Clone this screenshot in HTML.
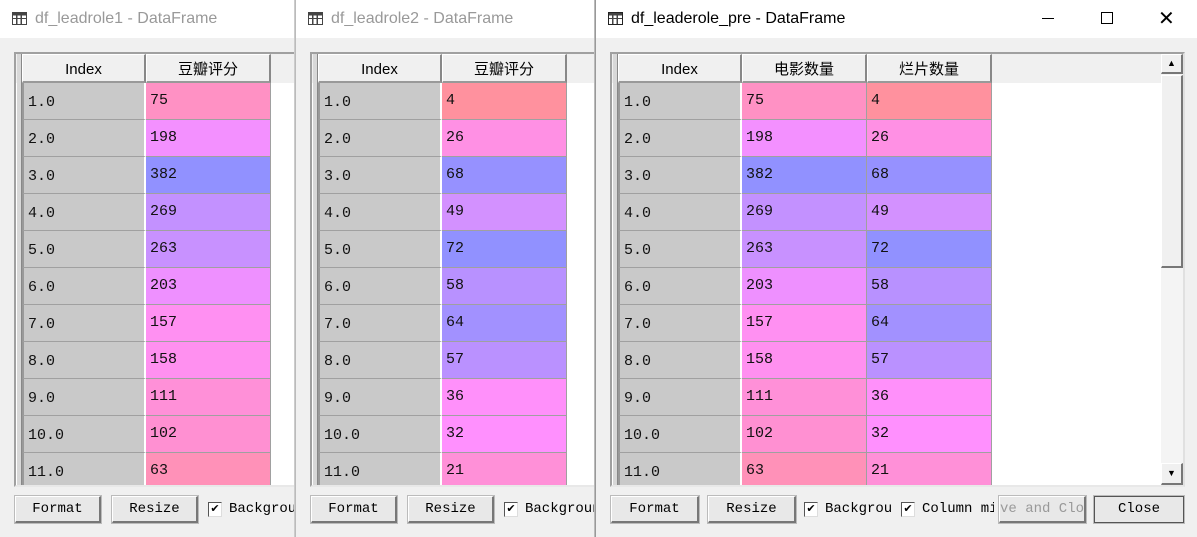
<!DOCTYPE html>
<html><head><meta charset="utf-8"><style>
*{margin:0;padding:0;box-sizing:border-box}
body{width:1197px;height:537px;overflow:hidden;background:#f0f0f0;position:relative;font-family:"Liberation Sans","Noto Sans CJK SC",sans-serif}
.win{position:absolute;top:0;height:537px;background:#f0f0f0;overflow:hidden}
.tb{position:absolute;left:0;top:0;right:0;height:38px;background:#fff;font-size:16px;line-height:38px;padding-left:35px;color:#999}
.ico{position:absolute;left:12px;top:12px;width:15px;height:13px;border:1.5px solid #444;background:
linear-gradient(90deg,transparent 3px,#444 3px,#444 4.5px,transparent 4.5px,transparent 7.5px,#444 7.5px,#444 9px,transparent 9px),
linear-gradient(180deg,#444 0,#444 2.5px,transparent 2.5px,transparent 5px,#444 5px,#444 6px,transparent 6px)}
.frame{position:absolute;top:52px;height:435px;background:#fff;border:2px solid #a0a0a0;border-right-color:#e0e0e0;border-bottom-color:#e8e8e8;overflow:hidden}
.hdrbg{position:absolute;left:0;top:0;right:0;height:29px;background:#f0f0f0}
.vh{position:absolute;left:1px;top:0;width:5px;height:440px;background:#d8d8d8;border-right:1px solid #888}
.col{position:absolute;top:0}
.h{height:29px;background:#f0f0f0;border:1px solid #a0a0a0;border-top:1px solid #fff;border-left:1px solid #fff;border-right:2px solid #888;border-bottom:2px solid #999;text-align:center;font-size:15px;line-height:30px;color:#000}
.c{height:37px;border-bottom:1px solid #a0a0a0;border-right:1px solid #a0a0a0;font-family:"Liberation Mono",monospace;font-size:15px;color:#111;padding-left:4px;padding-top:9px}
.ix .c{background:#c9c9c9;padding-top:11px;border-left:2px solid #999;border-right:2px solid #fff}
.btn{position:absolute;top:496px;height:27px;background:#e8e8e8;border:1px solid #fff;border-right:2px solid #777;border-bottom:2px solid #777;font-family:"Liberation Mono",monospace;font-size:14px;text-align:center;line-height:24px;color:#000;outline:1px solid #bbb}
.cb{position:absolute;top:502px;width:14px;height:15px;background:#fff;border:1px solid #555;border-right-color:#ddd;border-bottom-color:#ddd;font-size:11px;line-height:12px;text-align:center}
.lbl{position:absolute;top:501px;font-family:"Liberation Mono",monospace;font-size:14px;color:#000;white-space:nowrap;overflow:hidden}
</style></head><body>

<!-- Window 1 -->
<div class="win" style="left:0;width:295px;border-right:1px solid #ccc">
<div class="tb"><span class="ico"></span>df_leadrole1 - DataFrame</div>
<div class="frame" style="left:14px;width:300px"><div class="hdrbg"></div><div class="vh"></div>
<div class="col ix" style="left:6px;width:124px"><div class="h">Index</div>
<div class="c">1.0</div><div class="c">2.0</div><div class="c">3.0</div><div class="c">4.0</div><div class="c">5.0</div><div class="c">6.0</div><div class="c">7.0</div><div class="c">8.0</div><div class="c">9.0</div><div class="c">10.0</div><div class="c">11.0</div></div>
<div class="col" style="left:130px;width:125px"><div class="h">豆瓣评分</div>
<div class="c" style="background:#ff91c4">75</div><div class="c" style="background:#f390ff">198</div><div class="c" style="background:#9191ff">382</div><div class="c" style="background:#c391ff">269</div><div class="c" style="background:#c891ff">263</div><div class="c" style="background:#ee90ff">203</div><div class="c" style="background:#ff90f2">157</div><div class="c" style="background:#ff90f0">158</div><div class="c" style="background:#ff90d8">111</div><div class="c" style="background:#ff90d2">102</div><div class="c" style="background:#ff91b8">63</div></div>
</div>
<div class="btn" style="left:15px;width:86px">Format</div>
<div class="btn" style="left:112px;width:86px">Resize</div>
<div class="cb" style="left:208px">✔</div><div class="lbl" style="left:229px;width:66px">Background</div>
</div>

<!-- Window 2 -->
<div class="win" style="left:295px;width:300px;border-left:1px solid #bbb;border-right:1px solid #bbb">
<div class="tb"><span class="ico"></span>df_leadrole2 - DataFrame</div>
<div class="frame" style="left:14px;width:300px"><div class="hdrbg"></div><div class="vh"></div>
<div class="col ix" style="left:6px;width:124px"><div class="h">Index</div>
<div class="c">1.0</div><div class="c">2.0</div><div class="c">3.0</div><div class="c">4.0</div><div class="c">5.0</div><div class="c">6.0</div><div class="c">7.0</div><div class="c">8.0</div><div class="c">9.0</div><div class="c">10.0</div><div class="c">11.0</div></div>
<div class="col" style="left:130px;width:125px"><div class="h">豆瓣评分</div>
<div class="c" style="background:#ff919e">4</div><div class="c" style="background:#ff90e4">26</div><div class="c" style="background:#9691ff">68</div><div class="c" style="background:#d391ff">49</div><div class="c" style="background:#9191ff">72</div><div class="c" style="background:#b891ff">58</div><div class="c" style="background:#a291ff">64</div><div class="c" style="background:#ba91ff">57</div><div class="c" style="background:#ff90fa">36</div><div class="c" style="background:#ff90fe">32</div><div class="c" style="background:#ff90d8">21</div></div>
</div>
<div class="btn" style="left:15px;width:86px">Format</div>
<div class="btn" style="left:112px;width:86px">Resize</div>
<div class="cb" style="left:208px">✔</div><div class="lbl" style="left:229px;width:71px">Background</div>
</div>

<!-- Window 3 -->
<div class="win" style="left:595px;width:602px;border-left:1px solid #999">
<div class="tb" style="color:#000"><span class="ico" style="border-color:#222"></span>df_leaderole_pre - DataFrame
<span style="position:absolute;left:446px;top:18px;width:12px;height:1px;background:#000"></span>
<span style="position:absolute;left:505px;top:12px;width:12px;height:12px;border:1px solid #000"></span>
<span style="position:absolute;left:562px;top:0;font-size:20px;font-weight:300">✕</span></div>
<div class="frame" style="left:14px;width:575px"><div class="hdrbg"></div><div class="vh"></div>
<div class="col ix" style="left:6px;width:124px"><div class="h">Index</div>
<div class="c">1.0</div><div class="c">2.0</div><div class="c">3.0</div><div class="c">4.0</div><div class="c">5.0</div><div class="c">6.0</div><div class="c">7.0</div><div class="c">8.0</div><div class="c">9.0</div><div class="c">10.0</div><div class="c">11.0</div></div>
<div class="col" style="left:130px;width:125px"><div class="h">电影数量</div>
<div class="c" style="background:#ff91c4">75</div><div class="c" style="background:#f390ff">198</div><div class="c" style="background:#9191ff">382</div><div class="c" style="background:#c391ff">269</div><div class="c" style="background:#c891ff">263</div><div class="c" style="background:#ee90ff">203</div><div class="c" style="background:#ff90f2">157</div><div class="c" style="background:#ff90f0">158</div><div class="c" style="background:#ff90d8">111</div><div class="c" style="background:#ff90d2">102</div><div class="c" style="background:#ff91b8">63</div></div>
<div class="col" style="left:255px;width:125px"><div class="h">烂片数量</div>
<div class="c" style="background:#ff919e">4</div><div class="c" style="background:#ff90e4">26</div><div class="c" style="background:#9691ff">68</div><div class="c" style="background:#d391ff">49</div><div class="c" style="background:#9191ff">72</div><div class="c" style="background:#b891ff">58</div><div class="c" style="background:#a291ff">64</div><div class="c" style="background:#ba91ff">57</div><div class="c" style="background:#ff90fa">36</div><div class="c" style="background:#ff90fe">32</div><div class="c" style="background:#ff90d8">21</div></div>
<div style="position:absolute;left:549px;top:0;width:22px;height:431px;background:#f4f4f4">
<div style="position:absolute;left:0;top:0;width:22px;height:20px;background:#f0f0f0;border:1px solid #fff;border-right:2px solid #777;border-bottom:2px solid #777;font-size:9px;text-align:center;line-height:17px">▲</div>
<div style="position:absolute;left:0;top:21px;width:22px;height:193px;background:#f0f0f0;border:1px solid #fff;border-right:2px solid #777;border-bottom:2px solid #777"></div>
<div style="position:absolute;left:0;bottom:0;width:22px;height:22px;background:#f0f0f0;border:1px solid #fff;border-right:2px solid #777;border-bottom:2px solid #777;font-size:9px;text-align:center;line-height:19px">▼</div>
</div>
</div>
<div class="btn" style="left:15px;width:88px">Format</div>
<div class="btn" style="left:112px;width:88px">Resize</div>
<div class="cb" style="left:208px">✔</div><div class="lbl" style="left:229px;width:68px">Background</div>
<div class="cb" style="left:305px">✔</div><div class="lbl" style="left:326px;width:72px">Column min/max</div>
<div class="btn" style="left:403px;width:87px;color:#999;overflow:hidden;white-space:nowrap;text-align:left;padding-left:1px"><span style="margin-left:-1px">ve and Clo</span></div>
<div class="btn" style="left:498px;width:90px;border:1px solid #555">Close</div>
</div>
</body></html>
